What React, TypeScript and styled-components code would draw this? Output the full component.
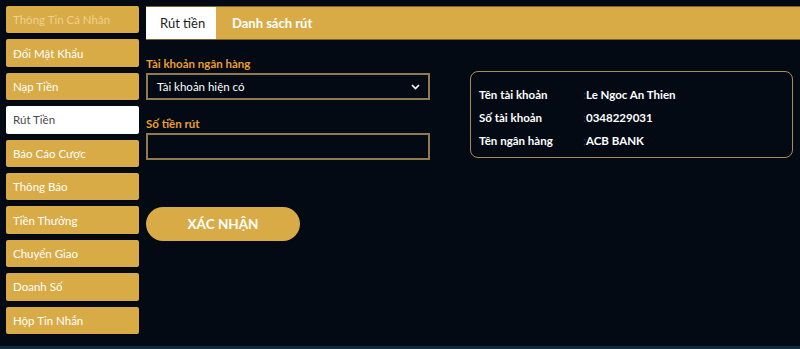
import styled, { createGlobalStyle } from "styled-components";
import { useState } from "react";

const GlobalStyle = createGlobalStyle`
  html, body {
    margin: 0;
    padding: 0;
    background: #040a13;
    font-family: Lato, "Open Sans", sans-serif;
  }
  * { box-sizing: border-box; }
`;

const Page = styled.div`
  width: 800px;
  height: 349px;
  display: flex;
  flex-direction: column;
  background: #040a13;
  overflow: hidden;
`;

const Body = styled.div`
  flex: 1;
  display: flex;
  gap: 7px;
  padding: 6px 0 0 6px;
`;

const Footer = styled.div`
  height: 3px;
  background: #0d2a40;
`;

const Sidebar = styled.ul`
  width: 133px;
  margin: 0;
  padding: 0;
  list-style: none;
  display: flex;
  flex-direction: column;
  gap: 6px;
`;

const MenuItem = styled.li<{ $active?: boolean; $muted?: boolean }>`
  height: 27.4px;
  display: flex;
  align-items: center;
  padding-left: 7px;
  border-radius: 2px;
  font-size: 11.5px;
  background: ${({ $active }) => ($active ? "#ffffff" : "#d9ab46")};
  color: ${({ $active, $muted }) =>
    $active ? "#4a4a4a" : $muted ? "#ecd093" : "#ffffff"};
  box-shadow: 0 1px 1px rgba(0, 0, 0, 0.6);
  cursor: pointer;
`;

const Main = styled.div`
  flex: 1;
  display: flex;
  flex-direction: column;
`;

const TabBar = styled.div`
  height: 34px;
  display: flex;
  background: #d9ab46;
  border-top: 1px solid #7a6330;
  border-bottom: 1px solid #7a6330;
`;

const Tab = styled.div<{ $active?: boolean }>`
  display: flex;
  align-items: center;
  white-space: nowrap;
  padding: 0 16px 0 ${({ $active }) => ($active ? "14px" : "16px")};
  width: ${({ $active }) => ($active ? "70px" : "auto")};
  font-size: 13px;
  font-weight: ${({ $active }) => ($active ? 400 : 700)};
  background: ${({ $active }) => ($active ? "#ffffff" : "transparent")};
  color: ${({ $active }) => ($active ? "#1d1d1d" : "#ffffff")};
  cursor: pointer;
`;

const Content = styled.div`
  display: flex;
  padding-top: 17px;
`;

const FormCol = styled.div`
  width: 284px;
  display: flex;
  flex-direction: column;
`;

const Label = styled.label`
  font-size: 11.5px;
  font-weight: 700;
  color: #eb9e32;
  line-height: 14px;
  margin-bottom: 2px;
`;

const FieldBox = styled.div`
  height: 27px;
  border: 2px solid #8f7a52;
  background: #040a13;
  display: flex;
  align-items: center;
  justify-content: space-between;
  padding: 0 8px 0 9px;
  color: #ffffff;
  font-size: 11.5px;
  margin-bottom: 17px;
`;

const AmountInput = styled.input`
  height: 27px;
  border: 2px solid #8f7a52;
  background: #040a13;
  color: #fff;
  font-size: 11.5px;
  padding: 0 9px;
  outline: none;
`;

const SubmitButton = styled.button`
  margin-top: 47px;
  width: 154px;
  height: 34px;
  border: none;
  border-radius: 17px;
  background: #d9ab46;
  color: #ffffff;
  font-family: Lato, sans-serif;
  font-size: 13.5px;
  font-weight: 700;
  cursor: pointer;
`;

const InfoBox = styled.div`
  margin: 14px 0 0 40px;
  width: 323px;
  height: 87px;
  border: 1.5px solid #a98b55;
  border-radius: 8px;
  padding: 14px 0 0 8px;
  display: flex;
  flex-direction: column;
  gap: 6px;
`;

const InfoRow = styled.div`
  display: flex;
  font-size: 11.5px;
  font-weight: 700;
  color: #ffffff;
  line-height: 17px;
`;

const InfoKey = styled.span`
  width: 104px;
`;

const Colon = styled.span`
  color: #3a3f46;
  width: 3px;
  font-weight: 400;
`;

const menu = [
  "Thông Tin Cá Nhân",
  "Đổi Mật Khẩu",
  "Nạp Tiền",
  "Rút Tiền",
  "Báo Cáo Cược",
  "Thông Báo",
  "Tiền Thưởng",
  "Chuyển Giao",
  "Doanh Số",
  "Hộp Tin Nhắn",
];

const info = [
  ["Tên tài khoản", "Le Ngoc An Thien"],
  ["Số tài khoản", "0348229031"],
  ["Tên ngân hàng", "ACB BANK"],
];

export default function App() {
  const [amount, setAmount] = useState("");
  return (
    <>
      <GlobalStyle />
      <Page>
        <Body>
          <Sidebar>
            {menu.map((m, i) => (
              <MenuItem key={m} $active={i === 3} $muted={i === 0}>
                {m}
              </MenuItem>
            ))}
          </Sidebar>
          <Main>
            <TabBar>
              <Tab $active>Rút tiền</Tab>
              <Tab>Danh sách rút</Tab>
            </TabBar>
            <Content>
              <FormCol>
                <Label>Tài khoản ngân hàng</Label>
                <FieldBox>
                  <span>Tài khoản hiện có</span>
                  <svg width="9" height="6" viewBox="0 0 9 6">
                    <path d="M1 1l3.5 3.5L8 1" stroke="#fff" strokeWidth="1.6" fill="none" />
                  </svg>
                </FieldBox>
                <Label>Số tiền rút</Label>
                <AmountInput value={amount} onChange={(e) => setAmount(e.target.value)} />
                <SubmitButton>XÁC NHẬN</SubmitButton>
              </FormCol>
              <InfoBox>
                {info.map(([k, v]) => (
                  <InfoRow key={k}>
                    <InfoKey>{k}</InfoKey>
                    <Colon>:</Colon>
                    <span>{v}</span>
                  </InfoRow>
                ))}
              </InfoBox>
            </Content>
          </Main>
        </Body>
        <Footer />
      </Page>
    </>
  );
}
